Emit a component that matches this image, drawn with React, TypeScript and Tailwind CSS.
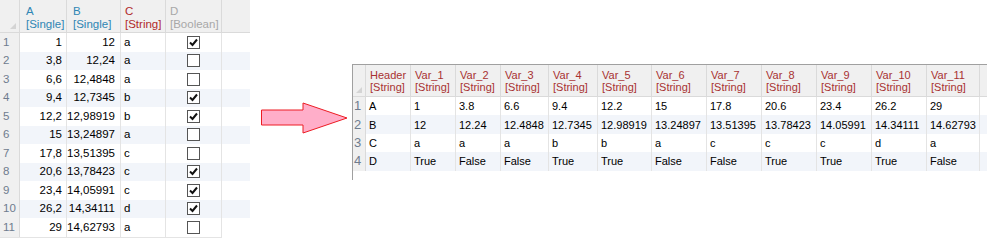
import React from "react";

const leftRows = [
    ["1", "12", "a", true],
    ["3,8", "12,24", "a", false],
    ["6,6", "12,4848", "a", false],
    ["9,4", "12,7345", "b", true],
    ["12,2", "12,98919", "b", true],
    ["15", "13,24897", "a", false],
    ["17,8", "13,51395", "c", false],
    ["20,6", "13,78423", "c", true],
    ["23,4", "14,05991", "c", true],
    ["26,2", "14,34111", "d", true],
    ["29", "14,62793", "a", false],
] as const

const rightHeaders = ["Header", "Var_1", "Var_2", "Var_3", "Var_4", "Var_5", "Var_6", "Var_7", "Var_8", "Var_9", "Var_10", "Var_11"]
const rightWidths = ["w-[45px]", "w-[45px]", "w-[45px]", "w-[48px]", "w-[49px]", "w-[54px]", "w-[55px]", "w-[55px]", "w-[55px]", "w-[55px]", "w-[55px]", "w-[53px]"]
const rightRows = [
    ["A", "1", "3.8", "6.6", "9.4", "12.2", "15", "17.8", "20.6", "23.4", "26.2", "29"],
    ["B", "12", "12.24", "12.4848", "12.7345", "12.98919", "13.24897", "13.51395", "13.78423", "14.05991", "14.34111", "14.62793"],
    ["C", "a", "a", "a", "b", "b", "a", "c", "c", "c", "d", "a"],
    ["D", "True", "False", "False", "True", "True", "False", "False", "True", "True", "True", "False"],
]

function CheckBox({checked}: {checked: boolean}) {
    return (
        <div className="w-[13px] h-[13px] border border-[#555555] bg-white flex items-center justify-center">
            {checked && (
                <svg width="11" height="11" viewBox="0 0 11 11">
                    <path d="M2 5.5 L4.5 8 L9 2.5" fill="none" stroke="#111" strokeWidth="2"/>
                </svg>
            )}
        </div>
    )
}

function Corner() {
    return (
        <svg width="6" height="6" viewBox="0 0 6 6" className="absolute right-[3px] bottom-[3px]">
            <polygon points="6,0 6,6 0,6" fill="#d4d4d4"/>
        </svg>
    )
}

function LeftGrid() {
    return (
        <div className="w-[250px] flex flex-col text-[11.5px] leading-[13px] font-['Liberation_Sans',Arial,sans-serif]">
            <div className="flex h-[33px] bg-[#f0f0f0] border-b border-[#dadada]">
                <div className="relative w-[20px] border-r border-[#dadada]"><Corner/></div>
                <div className="w-[47px] pt-[5px] pl-[6px] text-[#2f86b4] border-r border-[#dadada]">A<br/>[Single]</div>
                <div className="w-[54px] pt-[5px] pl-[6px] text-[#2f86b4] border-r border-[#dadada]">B<br/>[Single]</div>
                <div className="w-[45px] pt-[5px] pl-[4px] text-[#b02a2a] border-r border-[#dadada]">C<br/>[String]</div>
                <div className="w-[56px] pt-[5px] pl-[4px] text-[#a8a8a8] border-r border-[#dadada]">D<br/>[Boolean]</div>
                <div className="flex-1"></div>
            </div>
            {leftRows.map((r, i) => (
                <div key={i} className={`flex h-[18.5px] ${i % 2 === 1 ? "bg-[#f2f5fa]" : "bg-white"}`}>
                    <div className="w-[20px] bg-[#f0f0f0] border-r border-[#dadada] pl-[3px] flex items-center text-[#6f7c8e]">{i + 1}</div>
                    <div className="w-[47px] pr-[4px] flex items-center justify-end text-black border-r border-[#e4e4e4]">{r[0]}</div>
                    <div className="w-[54px] pr-[5px] flex items-center justify-end text-black border-r border-[#e4e4e4]">{r[1]}</div>
                    <div className="w-[45px] pl-[3px] flex items-center text-black border-r border-[#e4e4e4]">{r[2]}</div>
                    <div className="w-[56px] flex items-center justify-center border-r border-[#e4e4e4]"><CheckBox checked={r[3]}/></div>
                    <div className="flex-1"></div>
                </div>
            ))}
            <div className="h-px w-[222px] bg-[#e4e4e4]"></div>
        </div>
    )
}

function Arrow() {
    return (
        <svg width="87" height="32" viewBox="0 0 87 32" className="ml-[11px] mt-[102px] shrink-0">
            <polygon points="0.5,8 42,8 42,1 86,16 42,31 42,23 0.5,23" fill="#ffaec9" stroke="#ed1c24" strokeWidth="1"/>
        </svg>
    )
}

function RightGrid() {
    return (
        <div className="ml-[4px] mt-[64px] w-[635px] h-[116px] border-t border-l border-[#a0a0a0] flex flex-col text-[11px] leading-[12px] font-['Liberation_Sans',Arial,sans-serif]">
            <div className="flex h-[32px] bg-[#f0f0f0] border-b border-[#dadada]">
                <div className="relative w-[13px] border-r border-[#dadada]"><Corner/></div>
                {rightHeaders.map((h, i) => (
                    <div key={h} className={`${rightWidths[i]} pt-[4px] pl-[4px] text-[#a83232] border-r border-[#dadada]`}>{h}<br/>[String]</div>
                ))}
                <div className="flex-1"></div>
            </div>
            {rightRows.map((r, i) => (
                <div key={i} className={`flex h-[18.4px] ${i % 2 === 1 ? "bg-[#f2f5fa]" : "bg-white"}`}>
                    <div className="w-[13px] bg-[#f0f0f0] border-r border-[#dadada] pl-[1px] flex items-center text-[13px] text-[#6f7c8e]">{i + 1}</div>
                    {r.map((v, j) => (
                        <div key={j} className={`${rightWidths[j]} pl-[3px] flex items-center text-black border-r border-[#e4e4e4]`}>{v}</div>
                    ))}
                    <div className="flex-1"></div>
                </div>
            ))}
            <div className="flex-1 bg-white"></div>
        </div>
    )
}

export default function App() {
    return (
        <div className="w-[987px] h-[240px] bg-white flex items-start overflow-hidden">
            <LeftGrid/>
            <Arrow/>
            <RightGrid/>
        </div>
    )
}
